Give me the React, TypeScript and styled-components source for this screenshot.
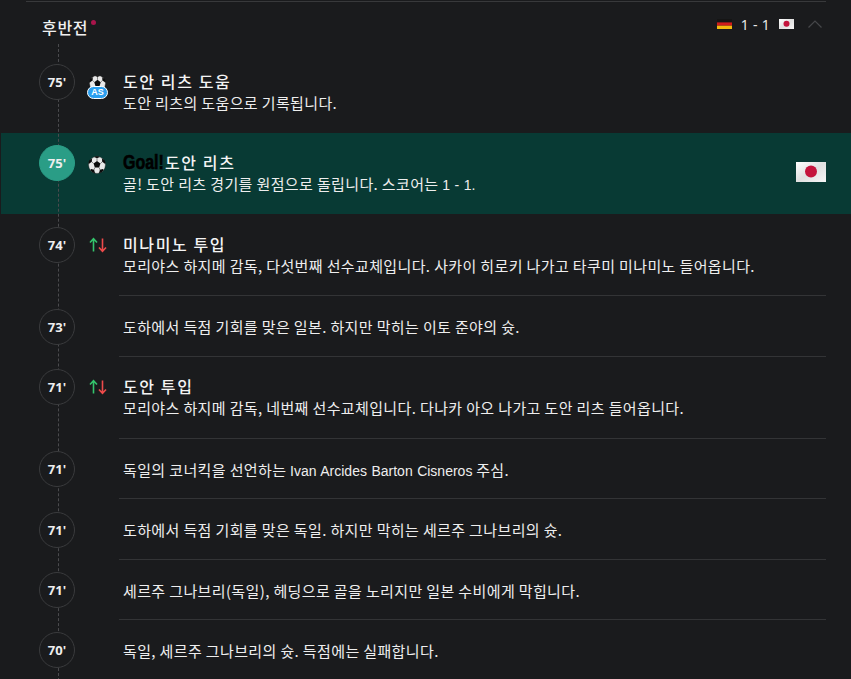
import React from "react";
import styled, { createGlobalStyle } from "styled-components";

const Global = createGlobalStyle`
  html, body { margin: 0; padding: 0; background: #1a1b1d; }
  body { font-family: "Noto Sans CJK KR", "Liberation Sans", sans-serif; color: #f2f2f2; }
`;

const Page = styled.div`
  height: 679px;
  width: 851px;
  overflow: hidden;
  box-sizing: border-box;
  padding-left: 1px;
`;
const TopRule = styled.div`
  height: 1px;
  margin: 1px 25px 0 25px;
  background: #38393b;
`;
const Head = styled.div`
  height: 50px;
  display: flex;
  align-items: center;
  padding: 0 25px 0 41px;
`;
const HeadTitle = styled.h2`
  margin: 0;
  font-size: 16px;
  font-weight: 500;
  letter-spacing: 0.7px;
  line-height: 20px;
  color: #f0f0f0;
  display: flex;
`;
const Dot = styled.span`
  width: 5px;
  height: 5px;
  margin: 0 0 0 3px;
  border-radius: 50%;
  background: #a9154b;
  transform: translateY(3px);
`;
const Score = styled.div`
  margin-left: auto;
  display: flex;
  align-items: center;
  font-family: "Noto Sans", sans-serif;
  font-size: 14px;
  color: #e8e8e8;
  transform: translateY(-3px);
`;
const ScoreText = styled.span`
  margin: 0 9px;
  letter-spacing: 0.3px;
  white-space: pre;
`;
const Chevron = styled.svg`
  margin: 0 4px 0 14px;
  display: block;
`;
const Timeline = styled.div`
  position: relative;
  &::before {
    content: "";
    position: absolute;
    left: 57px;
    top: -8px;
    bottom: 0;
    border-left: 1px dashed #4a4a4d;
  }
`;
const Row = styled.div<{ $tall?: boolean; $goal?: boolean; $line?: boolean }>`
  display: grid;
  grid-template-columns: 38px 36px 36px 1fr auto;
  padding: ${(p) => (p.$line ? "12.5px" : "12px")} 25px 0 38px;
  height: ${(p) => (p.$tall ? (p.$line ? "82px" : "81px") : "60.5px")};
  box-sizing: border-box;
  background: ${(p) => (p.$goal ? "#083a34" : "transparent")};
`;
const Time = styled.div<{ $goal?: boolean }>`
  position: relative;
  z-index: 1;
  width: 36px;
  height: 36px;
  box-sizing: border-box;
  border-radius: 50%;
  border: 1px solid ${(p) => (p.$goal ? "#2a9d86" : "#3a3b3d")};
  background: ${(p) => (p.$goal ? "#2a9d86" : "#1a1b1d")};
  display: flex;
  align-items: center;
  justify-content: center;
  font-family: "Open Sans", sans-serif;
  font-weight: 700;
  font-size: 13px;
  color: #eeeeee;
`;
const IconCell = styled.div`
  grid-column: 2 / 4;
  display: flex;
  height: 36px;
  align-items: center;
  padding-left: 10px;
  position: relative;
  z-index: 1;
`;
const Body = styled.div<{ $line?: boolean; $plain?: boolean }>`
  grid-column: 4;
  margin: -12px 0 0 -30px;
  padding: ${(p) => (p.$plain ? "19.5px" : "19px")} 0 0 4px;
  border-bottom: ${(p) => (p.$line ? "1px solid #333436" : "0")};
`;
const Title = styled.div`
  font-size: 16px;
  font-weight: 500;
  letter-spacing: 1.6px;
  line-height: 21px;
  color: #f4f4f4;
  display: flex;
  white-space: pre;
`;
const Goal = styled.span`
  display: inline-block;
  width: 42px;
  font-family: "Liberation Sans", sans-serif;
  font-weight: 700;
  font-size: 20px;
  letter-spacing: 0;
  color: #000;
  -webkit-text-stroke: 0.6px #000;
  transform: scaleX(0.8);
  transform-origin: left center;
`;
const Desc = styled.div`
  font-size: 15px;
  letter-spacing: 0.37px;
  line-height: 21px;
  color: #eeeeee;
  white-space: nowrap;
`;
const Latin = styled.span`
  font-family: "Liberation Sans", sans-serif;
  font-size: 14px;
  letter-spacing: 0;
  word-spacing: 0.6px;
`;
const FlagBig = styled.div`
  grid-column: 5;
  align-self: start;
  padding-top: 17px;
`;
const BallWrap = styled.div`
  position: relative;
  width: 21px;
  height: 24px;
  margin-top: 10px;
  padding-left: 2px;
  box-sizing: border-box;
`;
const GoalBall = styled.div`
  margin: 4px 0 0 1px;
`;
const SwapWrap = styled.div`
  margin-left: 2px;
`;
const AsBadge = styled.span`
  position: absolute;
  left: 0;
  top: 11px;
  width: 21px;
  height: 13px;
  border-radius: 7px;
  background: #2b9fef;
  border: 1px solid #ffffff;
  box-sizing: border-box;
  color: #fff;
  font-family: "Liberation Sans", sans-serif;
  font-size: 9px;
  font-weight: 700;
  line-height: 11px;
  text-align: center;
`;

const Ball = ({ size = 20 }: { size?: number }) => (
  <svg width={size} height={size} viewBox="0 0 20 20" style={{ display: "block" }}>
    <circle cx="10" cy="10" r="9.4" fill="#e9e9e9" stroke="#2a2a2a" strokeWidth="0.5" />
    <path d="M10 5.6l3.8 2.8-1.4 4.5H7.6L6.2 8.4z" fill="#0c0c0c" />
    <path d="M7 1l3 1.4L13 1l-1.4-.8H8.4zM15.6 2.8l.1 3.6 3.2 2.2.7-.6-1-3.2zM4.4 2.8l-.1 3.6L1.1 8.6l-.7-.6 1-3.2zM3.4 14.4l3.4 1 1 3.7-2.6-.8-2.6-2.6zM16.6 14.4l-3.4 1-1 3.7 2.6-.8 2.6-2.6z" fill="#0c0c0c" />
    <path d="M10 2.4v3.2M13.8 8.4l2-2M12.4 12.9l1 2.5M7.6 12.9l-1 2.5M6.2 8.4l-2-2" stroke="#444" strokeWidth="0.7" />
  </svg>
);

const Swap = () => (
  <svg width="20" height="16" viewBox="0 0 20 16" fill="none" strokeWidth="1.6" style={{ display: "block" }}>
    <path d="M4.5 14.5V2M1 5.5l3.5-3.8L8 5.5" stroke="#34c46c" />
    <path d="M13.5 1.5V14M10 10.5l3.5 3.8 3.5-3.8" stroke="#ee4b4b" />
  </svg>
);

const Japan = ({ w, h }: { w: number; h: number }) => (
  <svg width={w} height={h} viewBox="0 0 30 20" style={{ display: "block" }}>
    <defs>
      <linearGradient id="jp" x1="0" y1="0" x2="1" y2="1">
        <stop offset="0" stopColor="#ffffff" />
        <stop offset="0.5" stopColor="#e0e0e0" />
        <stop offset="1" stopColor="#f6f6f6" />
      </linearGradient>
    </defs>
    <rect width="30" height="20" fill="url(#jp)" />
    <circle cx="15" cy="9.6" r="6" fill="#c4143c" />
  </svg>
);

const Germany = () => (
  <svg width="15" height="10" viewBox="0 0 15 10" style={{ display: "block" }}>
    <rect width="15" height="3.4" fill="#151515" />
    <rect y="3.4" width="15" height="3.3" fill="#d01c1c" />
    <rect y="6.7" width="15" height="3.3" fill="#f2b90f" />
  </svg>
);

type Ev = { t: string; kind?: "as" | "goal" | "swap"; title?: string; desc: React.ReactNode; line?: boolean };
const events: Ev[] = [
  { t: "75'", kind: "as", title: "도안 리츠 도움", desc: "도안 리츠의 도움으로 기록됩니다." },
  {
    t: "75'",
    kind: "goal",
    title: "도안 리츠",
    desc: (
      <>
        골! 도안 리츠 경기를 원점으로 돌립니다. 스코어는 <Latin>1 - 1.</Latin>
      </>
    ),
  },
  { t: "74'", kind: "swap", title: "미나미노 투입", desc: "모리야스 하지메 감독, 다섯번째 선수교체입니다. 사카이 히로키 나가고 타쿠미 미나미노 들어옵니다.", line: true },
  { t: "73'", desc: "도하에서 득점 기회를 맞은 일본. 하지만 막히는 이토 준야의 슛.", line: true },
  { t: "71'", kind: "swap", title: "도안 투입", desc: "모리야스 하지메 감독, 네번째 선수교체입니다. 다나카 아오 나가고 도안 리츠 들어옵니다.", line: true },
  {
    t: "71'",
    desc: (
      <>
        독일의 코너킥을 선언하는 <Latin>Ivan Arcides Barton Cisneros</Latin> 주심.
      </>
    ),
    line: true,
  },
  { t: "71'", desc: "도하에서 득점 기회를 맞은 독일. 하지만 막히는 세르주 그나브리의 슛.", line: true },
  { t: "71'", desc: "세르주 그나브리(독일), 헤딩으로 골을 노리지만 일본 수비에게 막힙니다.", line: true },
  { t: "70'", desc: "독일, 세르주 그나브리의 슛. 득점에는 실패합니다." },
];

export default function App() {
  return (
    <Page>
      <Global />
      <TopRule />
      <Head>
        <HeadTitle>
          후반전
          <Dot />
        </HeadTitle>
        <Score>
          <Germany />
          <ScoreText>1 - 1</ScoreText>
          <Japan w={15} h={10} />
          <Chevron width="14" height="8" viewBox="0 0 14 8" fill="none" stroke="#46474a" strokeWidth="1.2">
            <path d="M0.5 7.5L7 1l6.5 6.5" />
          </Chevron>
        </Score>
      </Head>
      <Timeline>
        {events.map((e, i) => (
          <Row key={i} $tall={!!e.kind} $goal={e.kind === "goal"} $line={e.line}>
            <Time $goal={e.kind === "goal"}>{e.t}</Time>
            <IconCell>
              {e.kind === "as" && (
                <BallWrap>
                  <Ball size={17} />
                  <AsBadge>AS</AsBadge>
                </BallWrap>
              )}
              {e.kind === "goal" && (
                <GoalBall>
                  <Ball size={18} />
                </GoalBall>
              )}
              {e.kind === "swap" && (
                <SwapWrap>
                  <Swap />
                </SwapWrap>
              )}
            </IconCell>
            <Body $line={e.line} $plain={!e.title}>
              {e.title ? (
                <>
                  <Title>
                    {e.kind === "goal" && <Goal>Goal!</Goal>}
                    {e.title}
                  </Title>
                  <Desc>{e.desc}</Desc>
                </>
              ) : (
                <Desc>{e.desc}</Desc>
              )}
            </Body>
            {e.kind === "goal" && (
              <FlagBig>
                <Japan w={30} h={20} />
              </FlagBig>
            )}
          </Row>
        ))}
      </Timeline>
    </Page>
  );
}
